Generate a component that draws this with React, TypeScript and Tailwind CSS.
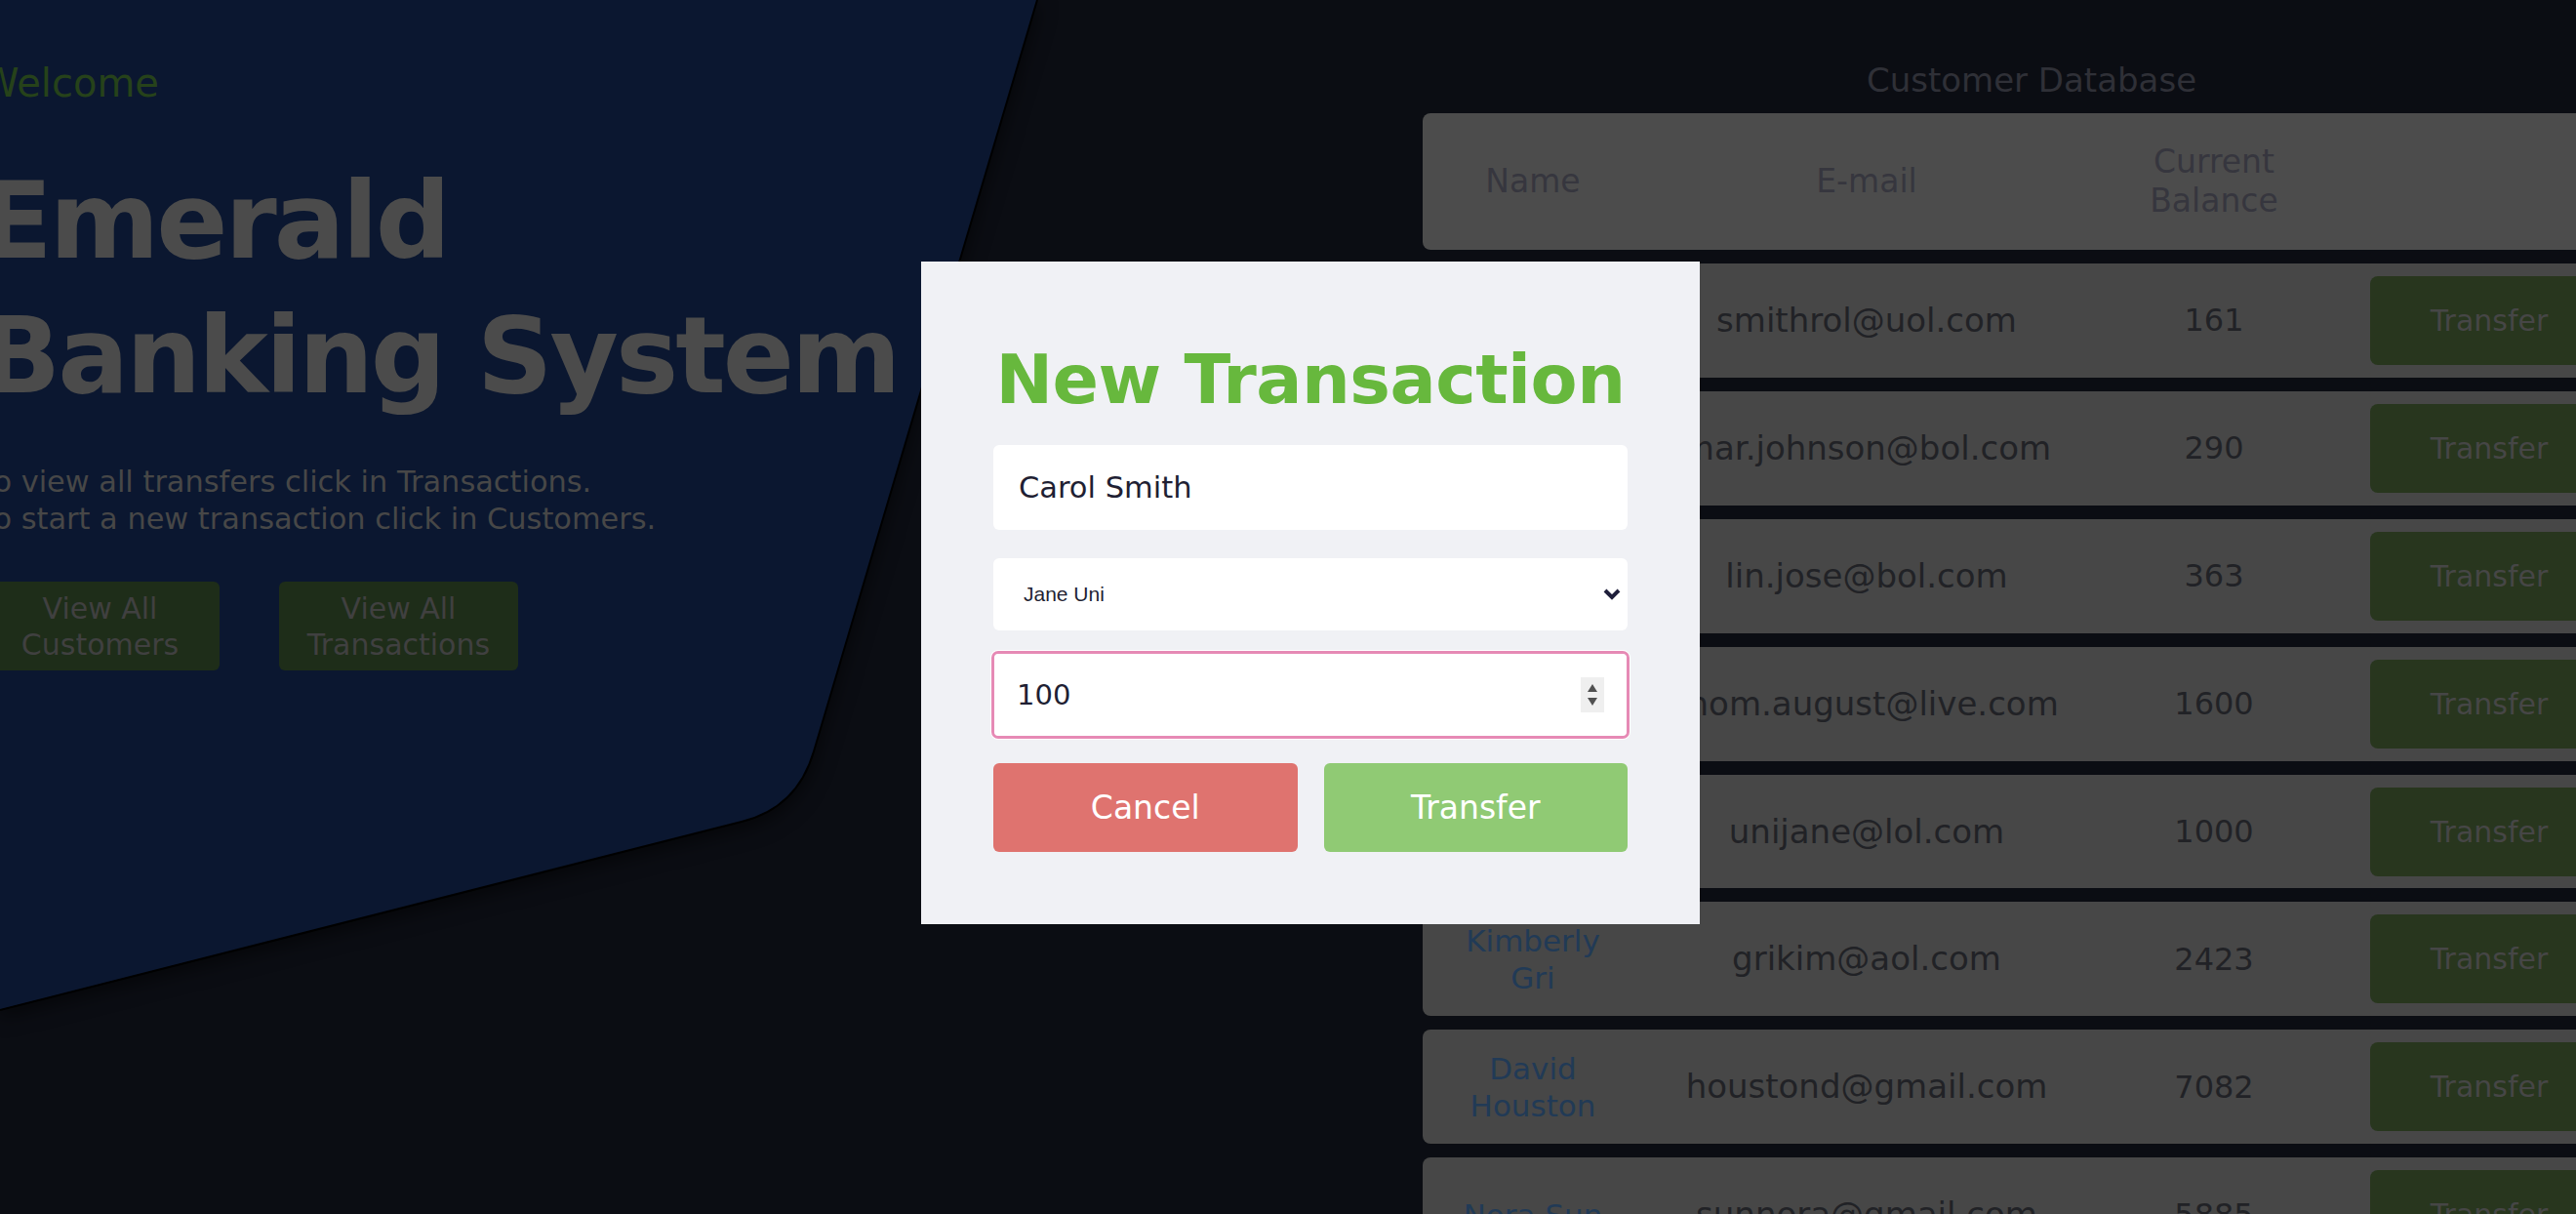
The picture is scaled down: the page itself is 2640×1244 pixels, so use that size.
import { useState } from "react";

// page behind the modal is drawn with already-dimmed colours (overlay look)
const customers = [
  { name: "Carol Smith", email: "smithrol@uol.com", balance: 161 },
  { name: "Mar Johnson", email: "mar.johnson@bol.com", balance: 290 },
  { name: "Jose Lin", email: "lin.jose@bol.com", balance: 363 },
  { name: "Thom August", email: "thom.august@live.com", balance: 1600 },
  { name: "Jane Uni", email: "unijane@lol.com", balance: 1000 },
  { name: "Kimberly Gri", email: "grikim@aol.com", balance: 2423 },
  { name: "David Houston", email: "houstond@gmail.com", balance: 7082 },
  { name: "Nora Sun", email: "sunnora@gmail.com", balance: 5885 },
];

function Hero() {
  return (
    <div className="-ml-[20px] w-[1478px] shrink-0 pt-[65px]">
      <p className="text-[40px] leading-none text-[#26421a]">Welcome</p>
      <h1 className="mt-[53px] text-[108px] font-bold leading-[138px] tracking-[-3px] text-[#4b4b4b]">
        Emerald
        <br />
        Banking System
      </h1>
      <p className="mt-[41px] text-[30.4px] leading-[38px] text-[#474747]">
        To view all transfers click in Transactions.
        <br />
        To start a new transaction click in Customers.
      </p>
      <div className="mt-[45px] flex gap-[61px]">
        <button className="h-[91px] w-[245px] rounded-md bg-[#1e2d19] text-[30px] leading-[37px] text-[#404040]">
          View All
          <br />
          Customers
        </button>
        <button className="h-[91px] w-[245px] rounded-md bg-[#1e2d19] text-[30px] leading-[37px] text-[#404040]">
          View All
          <br />
          Transactions
        </button>
      </div>
    </div>
  );
}

function CustomerTable() {
  return (
    <div className="w-[1248px] shrink-0 pt-[62px]">
      <h2 className="text-center text-[34px] leading-[40px] text-[#2f3037]">Customer Database</h2>
      <div className="mt-[14px] grid h-[140px] grid-cols-[226px_458px_254px_310px] items-center rounded-lg bg-[#4c4c4c] text-center text-[33px] leading-[40px] text-[#36363e]">
        <span>Name</span>
        <span>E-mail</span>
        <span>
          Current
          <br />
          Balance
        </span>
        <span />
      </div>
      <div className="mt-[14px] flex flex-col gap-[14px]">
        {customers.map((c) => (
          <div
            key={c.email}
            className="grid h-[116.9px] grid-cols-[226px_458px_254px_310px] items-center rounded-lg bg-[#474747] text-center">
            <span className="px-[33px] text-[31px] leading-[38px] text-[#213a56]">{c.name}</span>
            <span className="text-[34px] text-[#212226]">{c.email}</span>
            <span className="text-[32px] text-[#212226]">{c.balance}</span>
            <div className="flex justify-center">
              <button className="h-[91px] w-[245px] rounded-lg bg-[#28361e] text-[30px] text-[#464646]">Transfer</button>
            </div>
          </div>
        ))}
      </div>
    </div>
  );
}

function TransactionModal() {
  const [target, setTarget] = useState("Jane Uni");
  const [amount, setAmount] = useState("100");

  return (
    <div className="fixed inset-0">
      <div className="absolute left-[944px] top-[268px] w-[798px] bg-[#f0f1f5] px-[74px] pb-[74px] pt-[86px]">
        <h3 className="text-center text-[70px] font-bold leading-none tracking-[-0.5px] text-[#67b83d]">
          New Transaction
        </h3>
        <input
          readOnly
          value="Carol Smith"
          className="mt-[32px] block h-[87px] w-full rounded-md bg-white pl-[26px] text-[30.5px] text-[#1f1f33] outline-none"
        />
        <div className="relative mt-[29px]">
          <select
            value={target}
            onChange={(e) => setTarget(e.target.value)}
            className="block h-[74px] w-full appearance-none rounded-md bg-white pl-[31px] font-['Liberation_Sans',sans-serif] text-[21px] text-[#1f1f33] outline-none">
            {customers.slice(1).map((c) => (
              <option key={c.email}>{c.name}</option>
            ))}
          </select>
          <svg className="pointer-events-none absolute right-[7px] top-[31px]" width="18" height="12" viewBox="0 0 18 12">
            <polyline points="2,2 9,9 16,2" fill="none" stroke="#1e1e3a" strokeWidth="4" />
          </svg>
        </div>
        <div className="relative -mx-[2px] mt-[21px] h-[90px] rounded-[7px] border-[3px] border-[#e68ab5] bg-white shadow-[0_0_0_1px_#ffffff]">
          <input
            value={amount}
            onChange={(e) => setAmount(e.target.value)}
            className="h-full w-full rounded-[5px] bg-white pl-[23px] text-[29px] text-[#1f1f33] outline-none"
          />
          <div className="pointer-events-none absolute right-[23px] top-[24px] flex h-[36px] w-[24px] flex-col items-center justify-center gap-[6px] bg-[#efefef]">
            <svg width="10" height="8" viewBox="0 0 10 8">
              <polygon points="5,0 10,8 0,8" fill="#505050" />
            </svg>
            <svg width="10" height="8" viewBox="0 0 10 8">
              <polygon points="0,0 10,0 5,8" fill="#505050" />
            </svg>
          </div>
        </div>
        <div className="mt-[25px] grid grid-cols-2 gap-[27px]">
          <button className="h-[91px] rounded-md bg-[#df736f] text-[33px] text-white">Cancel</button>
          <button className="h-[91px] rounded-md bg-[#90ca74] text-[33px] text-white">Transfer</button>
        </div>
      </div>
    </div>
  );
}

export default function App() {
  return (
    <div className="relative h-screen w-full overflow-hidden bg-[#0b0d13] font-['DejaVu_Sans',sans-serif]">
      {/* backdrop panel behind the hero */}
      <svg
        className="absolute left-0 top-0 drop-shadow-[0_6px_10px_rgba(0,0,0,0.55)]"
        width="1100"
        height="1100"
        viewBox="0 0 1100 1100">
        <path d="M-10 -10 L1066 -10 L834 770 Q817 828 760 842 L-10 1037 Z" fill="#0b1730" />
        <path d="M1063 0 L834 770 Q817 828 760 842 L0 1035" fill="none" stroke="#000000" strokeWidth="2" />
      </svg>
      <div className="relative flex">
        <Hero />
        <CustomerTable />
      </div>
      <TransactionModal />
    </div>
  );
}
